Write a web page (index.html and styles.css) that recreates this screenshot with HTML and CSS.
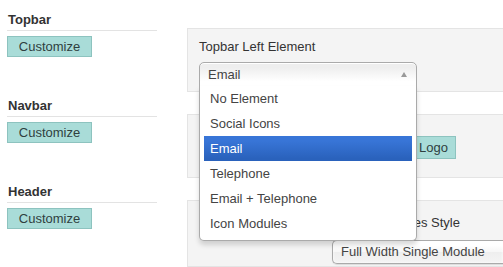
FILE: index.html
```html
<!DOCTYPE html>
<html>
<head>
<meta charset="utf-8">
<link rel="stylesheet" href="styles.css">
</head>
<body>
<div class="page">
  <div class="sidebar">
    <div class="section">
      <h3 class="sec-title">Topbar</h3>
      <button class="btn">Customize</button>
    </div>
    <div class="section">
      <h3 class="sec-title">Navbar</h3>
      <button class="btn">Customize</button>
    </div>
    <div class="section">
      <h3 class="sec-title">Header</h3>
      <button class="btn">Customize</button>
    </div>
  </div>
  <div class="main">
    <div class="panel panel-1">
      <div class="label">Topbar Left Element</div>
      <div class="chosen open">
        <div class="chosen-single"><span>Email</span><i class="arrow"></i></div>
        <div class="chosen-drop">
          <ul class="results">
            <li>No Element</li>
            <li>Social Icons</li>
            <li class="hl">Email</li>
            <li>Telephone</li>
            <li>Email + Telephone</li>
            <li>Icon Modules</li>
          </ul>
        </div>
      </div>
    </div>
    <div class="panel panel-2">
      <div class="btn-row">
        <button class="btn btn-logo">Logo</button>
      </div>
    </div>
    <div class="panel panel-3">
      <div class="field">
        <div class="label">Header Modules Style</div>
        <div class="chosen wide">
          <div class="chosen-single"><span>Full Width Single Module</span></div>
        </div>
      </div>
    </div>
  </div>
</div>
</body>
</html>
```
FILE: styles.css
```css
* { box-sizing: border-box; }
html, body { margin: 0; padding: 0; background: #fff; }
body {
  font-family: "Liberation Sans", Arial, sans-serif;
  font-size: 13px;
  color: #333;
  width: 503px;
  height: 267px;
  overflow: hidden;
}
.page { display: flex; }
.sidebar { width: 187px; padding: 12px 0 0 7px; flex: none; }
.section { width: 150px; margin-bottom: 41px; }
.section:last-child { margin-bottom: 0; }
.sec-title {
  margin: 0;
  font-size: 13px;
  line-height: 16px;
  font-weight: bold;
  color: #333;
  padding: 0 0 2px 1px;
  border-bottom: 1px solid #e3e3e3;
  margin-bottom: 5px;
}
.btn {
  display: block;
  font-family: "Liberation Sans", Arial, sans-serif;
  font-size: 13px;
  line-height: 15px;
  color: #2f3f3f;
  background: #a9dcd8;
  border: 1px solid #8dc3bf;
  padding: 2px 10px;
  border-radius: 0;
  width: 85px;
  height: 21px;
  text-align: center;
}
.main { flex: 1; min-width: 0; padding-top: 28px; }
.panel {
  background: #f4f4f4;
  border: 1px solid #e4e4e4;
  border-right: 0;
  height: 64px;
  margin-bottom: 22px;
  padding-left: 11px;
}
.panel-1 { padding-top: 10px; }
.label { line-height: 16px; color: #333; }
.chosen { position: relative; width: 218px; margin-top: 7px; font-size: 13px; color: #444; }
.chosen-single {
  height: 25px;
  line-height: 24px;
  padding-left: 8px;
  border: 1px solid #aaa;
  border-radius: 5px;
  background: linear-gradient(#fff 20%, #f6f6f6 50%, #eee 52%, #f4f4f4 100%);
  box-shadow: 0 0 3px #fff inset, 0 1px 1px rgba(0,0,0,0.1);
  position: relative;
  white-space: nowrap;
  overflow: hidden;
}
.open .chosen-single {
  border-bottom-left-radius: 0;
  border-bottom-right-radius: 0;
  background: linear-gradient(#eee 20%, #fff 80%);
  box-shadow: 0 1px 0 #fff inset;
}
.arrow {
  position: absolute;
  right: 9px;
  top: 9px;
  width: 0;
  height: 0;
  border-left: 3px solid transparent;
  border-right: 3px solid transparent;
  border-bottom: 5px solid #999;
}
.chosen-drop {
  position: absolute;
  top: 100%;
  left: 0;
  width: 218px;
  margin-top: -1px;
  background: #fff;
  border: 1px solid #aaa;
  border-top: 0;
  border-radius: 0 0 5px 5px;
  box-shadow: 0 4px 5px rgba(0,0,0,0.15);
  z-index: 10;
}
.results { list-style: none; margin: 0 4px 4px 0; padding: 0 0 0 4px; }
.results li { line-height: 15px; padding: 5px 6px; color: #444; }
.results li.hl {
  color: #fff;
  background: linear-gradient(#3875d7 20%, #2a62bc 90%);
}
.panel-2 { padding-top: 21px; }
.btn-row { display: flex; padding-left: 196px; }
.btn-logo { width: 61px; height: 23px; padding: 3px 7px 3px 0; text-align: right; }
.panel-3 { padding-top: 14px; padding-left: 144px; height: 67px; margin-bottom: 0; }
.field .label { line-height: 16px; }
.chosen.wide { width: 171px; margin-top: 9px; }
.wide .chosen-single { height: 24px; line-height: 22px; border-radius: 5px 0 0 5px; border-right: 0; }
```
